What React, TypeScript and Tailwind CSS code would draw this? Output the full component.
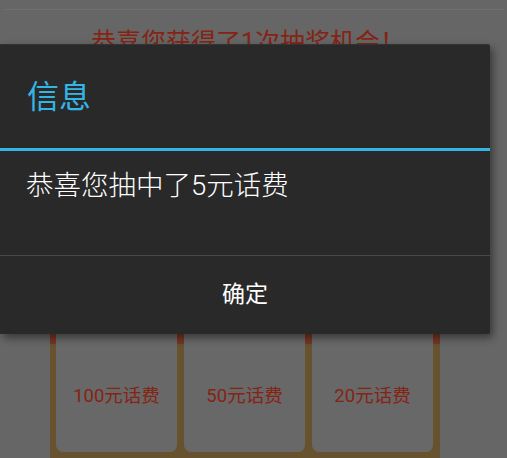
const font = { fontFamily: '"Roboto", "Noto Sans CJK SC", sans-serif' }

const prizes = ['100元话费', '50元话费', '20元话费']

export default function App() {
  return (
    <div className="relative h-[458px] w-[507px] overflow-hidden bg-[#666666]" style={font}>
      {/* page behind the dim */}
      <div className="flex h-full flex-col">
        <div className="mx-[4px] mt-[9px] border-t border-dotted border-[#7a7a7a]" />
        <p className="mt-[17px] pl-[91px] text-[25px] leading-[32px] text-[#852314]">恭喜您获得了1次抽奖机会！</p>
        <div className="mt-auto ml-[50px] flex h-[158px] w-[390px] gap-[7px] bg-[linear-gradient(#763624_0,#763624_44px,#66522f_44px)] pb-[6px] pl-[6px] pr-[7px]">
          {prizes.map((p) => (
            <div key={p} className="flex flex-1 items-end justify-center rounded-b-[7px] bg-[#686868] pb-[45px]">
              <span className="text-[18.5px] leading-[22px] text-[#852314]">{p}</span>
            </div>
          ))}
        </div>
      </div>

      {/* dialog */}
      <div className="absolute left-0 top-[44px] w-[490px] rounded-r-[2px] border-t border-[#333333] bg-[#292929] shadow-[3px_4px_8px_rgba(0,0,0,0.45)]">
        <div className="flex h-[103px] items-center px-[27px]">
          <span className="text-[32px] leading-[40px] text-[#33b5e5]">信息</span>
        </div>
        <div className="h-[3px] bg-[#33b5e5]" />
        <div className="h-[104px] px-[26px] pt-[17px]">
          <p className="text-[27.5px] font-light leading-[36px] text-white">恭喜您抽中了5元话费</p>
        </div>
        <div className="h-px bg-[#4a4a4a]" />
        <div className="flex h-[78px] items-center justify-center">
          <span className="text-[23px] leading-[30px] text-white">确定</span>
        </div>
      </div>
    </div>
  )
}
